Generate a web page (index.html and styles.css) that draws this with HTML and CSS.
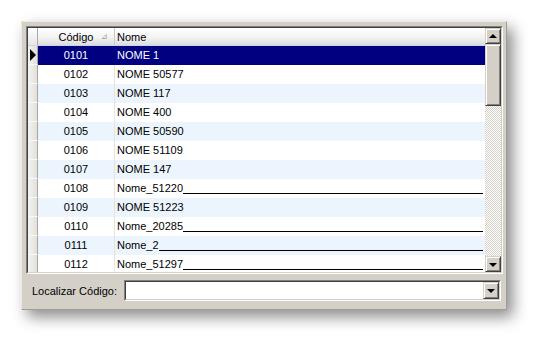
FILE: index.html
```html
<!DOCTYPE html>
<html>
<head>
<meta charset="utf-8">
<link rel="stylesheet" href="styles.css">
</head>
<body>
<div class="panel">
  <div class="grid">
    <div class="table">
      <div class="row header">
        <div class="ind"></div>
        <div class="c-cod">Código<span class="sort">⊿</span></div>
        <div class="c-nome">Nome</div>
      </div>
      <div class="row sel"><div class="ind"><span class="arrow"></span></div><div class="c-cod">0101</div><div class="c-nome">NOME 1</div></div>
      <div class="row"><div class="ind"></div><div class="c-cod">0102</div><div class="c-nome">NOME 50577</div></div>
      <div class="row alt"><div class="ind"></div><div class="c-cod">0103</div><div class="c-nome">NOME 117</div></div>
      <div class="row"><div class="ind"></div><div class="c-cod">0104</div><div class="c-nome">NOME 400</div></div>
      <div class="row alt"><div class="ind"></div><div class="c-cod">0105</div><div class="c-nome">NOME 50590</div></div>
      <div class="row"><div class="ind"></div><div class="c-cod">0106</div><div class="c-nome">NOME 51109</div></div>
      <div class="row alt"><div class="ind"></div><div class="c-cod">0107</div><div class="c-nome">NOME 147</div></div>
      <div class="row"><div class="ind"></div><div class="c-cod">0108</div><div class="c-nome">Nome_51220<span class="fill"></span></div></div>
      <div class="row alt"><div class="ind"></div><div class="c-cod">0109</div><div class="c-nome">NOME 51223</div></div>
      <div class="row"><div class="ind"></div><div class="c-cod">0110</div><div class="c-nome">Nome_20285<span class="fill"></span></div></div>
      <div class="row alt"><div class="ind"></div><div class="c-cod">0111</div><div class="c-nome">Nome_2<span class="fill"></span></div></div>
      <div class="row"><div class="ind"></div><div class="c-cod">0112</div><div class="c-nome">Nome_51297<span class="fill"></span></div></div>
    </div>
    <div class="vscroll">
      <div class="sbtn"><span class="tri up"></span></div>
      <div class="thumb"></div>
      <div class="track"></div>
      <div class="sbtn"><span class="tri down"></span></div>
    </div>
  </div>
  <div class="finder">
    <span class="label">Localizar Código:</span>
    <div class="combo">
      <div class="combo-input"></div>
      <div class="cbtn"><span class="tri down"></span></div>
    </div>
  </div>
</div>
</body>
</html>
```
FILE: styles.css
```css
html, body { margin: 0; padding: 0; background: #ffffff; }
body {
  width: 553px; height: 351px; overflow: hidden;
  font-family: "Liberation Sans", Arial, sans-serif;
  font-size: 11px; color: #000;
}
.panel {
  margin: 21px 0 0 21px;
  width: 486px; height: 289px;
  box-sizing: border-box;
  background: #d4d0c8;
  border-top: 1px solid #ece9e1;
  border-left: 1px solid #ece9e1;
  border-right: 1px solid #a09d96;
  border-bottom: 1px solid #a09d96;
  box-shadow: 6px 7px 14px rgba(0,0,0,0.45);
  padding: 4px 3px 0 4px;
  display: flex; flex-direction: column;
}
.grid {
  width: 477px; height: 248px; box-sizing: border-box;
  border-top: 1px solid #808080; border-left: 1px solid #808080;
  border-right: 1px solid #ffffff; border-bottom: 1px solid #ffffff;
  display: flex;
  position: relative;
}
.grid::before {
  content: ""; position: absolute; inset: 0;
  border-top: 1px solid #404040; border-left: 1px solid #404040;
  border-right: 1px solid #d4d0c8; border-bottom: 1px solid #d4d0c8;
  pointer-events: none;
}
.table {
  flex: 1; overflow: hidden; background: #fff;
  margin: 1px 0 1px 1px;
}
.row { display: flex; height: 19px; line-height: 19px; background: #fff; }
.row.alt { background: #ecf5fd; }
.row.header { height: 18px; line-height: 18px; background: linear-gradient(#ffffff, #f3f3f3 55%, #dcdcdc); border-bottom: 1px solid #c8d4ec; box-sizing: border-box; }
.ind {
  width: 10px; flex: none;
  background: linear-gradient(90deg, #f4f3ef, #e2e0da);
  border-right: 1px solid #a8a8a8;
  border-bottom: 1px solid #f8f8f8;
  box-sizing: border-box;
  display: flex; align-items: center; justify-content: center;
}
.header .ind { border-bottom: none; background: linear-gradient(#ffffff, #e6e6e6); }
.c-cod {
  width: 77px; flex: none; text-align: center;
  border-right: 1px solid #e4e4e4; box-sizing: border-box;
  position: relative;
}
.header .c-cod { border-right: 1px solid #c8c8c8; }
.sort { position: absolute; right: 6px; top: 0; font-size: 8px; color: #a0a0a0; }
.c-nome { flex: 1; padding-left: 2px; white-space: nowrap; overflow: hidden; display: flex; }
.fill { flex: 1; height: 14px; border-bottom: 1px solid #000; margin-right: 2px; }
.row.sel .c-cod, .row.sel .c-nome { background: #000080; color: #fff; }
.row.sel .c-cod { border-right-color: #000080; }
.arrow {
  width: 0; height: 0;
  border-top: 6px solid transparent; border-bottom: 6px solid transparent;
  border-left: 6px solid #000;
}
.vscroll {
  width: 16px; flex: none; display: flex; flex-direction: column;
  margin: 1px 1px 1px 0;
}
.sbtn, .thumb, .cbtn {
  background: #d4d0c8; box-sizing: border-box;
  border-top: 1px solid #d4d0c8; border-left: 1px solid #d4d0c8;
  border-right: 1px solid #404040; border-bottom: 1px solid #404040;
  box-shadow: inset 1px 1px 0 #ffffff, inset -1px -1px 0 #808080;
}
.sbtn { height: 16px; display: flex; align-items: center; justify-content: center; flex: none; }
.thumb { height: 62px; flex: none; }
.track {
  flex: 1;
  background-color: #f0eee9;
  background-image: repeating-conic-gradient(#d4d0c8 0 25%, #ffffff 0 50%);
  background-size: 2px 2px;
}
.tri { width: 0; height: 0; border-left: 4px solid transparent; border-right: 4px solid transparent; }
.tri.up { border-bottom: 4px solid #000; margin-bottom: 1px; }
.tri.down { border-top: 4px solid #000; margin-top: 1px; }
.finder {
  display: flex; align-items: center;
  margin-top: 6px; height: 21px;
}
.label { padding-left: 6px; width: 92px; flex: none; white-space: nowrap; color: #000; font-size: 11px; }
.combo {
  margin-left: 0;
  width: 377px; height: 21px; box-sizing: border-box;
  border-top: 1px solid #808080; border-left: 1px solid #808080;
  border-right: 1px solid #ffffff; border-bottom: 1px solid #ffffff;
  display: flex; position: relative; background: #fff;
}
.combo::before {
  content: ""; position: absolute; inset: 0;
  border-top: 1px solid #404040; border-left: 1px solid #404040;
  border-right: 1px solid #d4d0c8; border-bottom: 1px solid #d4d0c8;
  pointer-events: none;
}
.combo-input { flex: 1; }
.cbtn { width: 16px; height: 17px; margin: 1px 1px 1px 0; display: flex; align-items: center; justify-content: center; }
```
